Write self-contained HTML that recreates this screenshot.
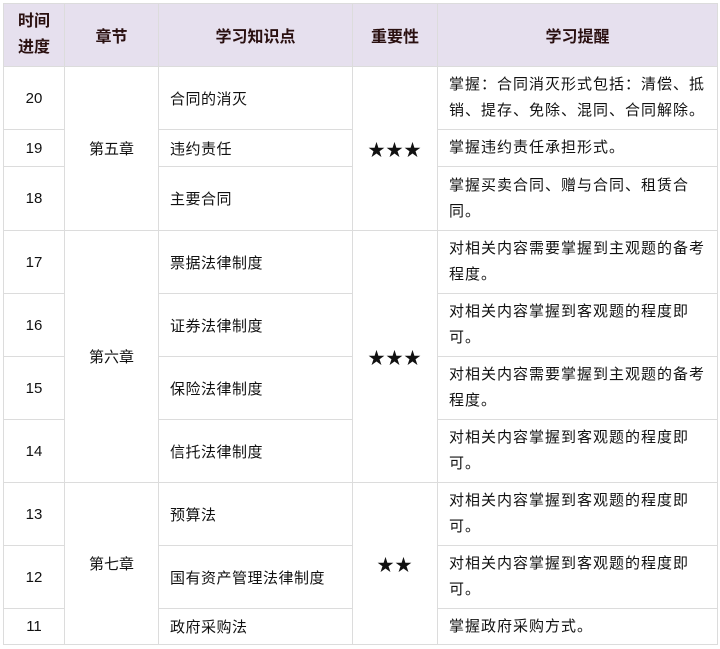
<!DOCTYPE html>
<html><head><meta charset="utf-8"><style>
body{margin:0;background:#fff;width:720px;height:649px;overflow:hidden;font-family:"Liberation Sans","Noto Sans CJK SC",sans-serif;}
table{position:absolute;left:3px;top:3px;border-collapse:collapse;table-layout:fixed;font-size:15px;color:#111;}
td{border:1px solid #dcdcdc;padding:0;vertical-align:middle;}
th{border:1px solid #dcdcdc;background:#e6e0ee;font-weight:bold;font-size:16px;color:#2a1010;padding:0;}
.c{text-align:center}
.l{padding-left:11px;text-align:left;letter-spacing:0.5px}
.t{padding-left:11px;padding-right:8px;line-height:26px;text-align:left;letter-spacing:1px}
.s{font-size:17px;letter-spacing:1px}
</style></head><body>
<table>
<colgroup><col style="width:61px"><col style="width:94px"><col style="width:194px"><col style="width:85px"><col style="width:280px"></colgroup>
<tr style="height:63px"><th style="line-height:26px">时间<br>进度</th><th>章节</th><th>学习知识点</th><th>重要性</th><th>学习提醒</th></tr>
<tr style="height:63px"><td class="c">20</td><td class="c" rowspan="3">第五章</td><td class="l">合同的消灭</td><td class="c s" rowspan="3">★★★</td><td class="t">掌握：合同消灭形式包括：清偿、抵销、提存、免除、混同、合同解除。</td></tr>
<tr style="height:37px"><td class="c">19</td><td class="l">违约责任</td><td class="t">掌握违约责任承担形式。</td></tr>
<tr style="height:64px"><td class="c">18</td><td class="l">主要合同</td><td class="t">掌握买卖合同、赠与合同、租赁合<br>同。</td></tr>
<tr style="height:63px"><td class="c">17</td><td class="c" rowspan="4">第六章</td><td class="l">票据法律制度</td><td class="c s" rowspan="4">★★★</td><td class="t">对相关内容需要掌握到主观题的备考<br>程度。</td></tr>
<tr style="height:63px"><td class="c">16</td><td class="l">证券法律制度</td><td class="t">对相关内容掌握到客观题的程度即<br>可。</td></tr>
<tr style="height:63px"><td class="c">15</td><td class="l">保险法律制度</td><td class="t">对相关内容需要掌握到主观题的备考<br>程度。</td></tr>
<tr style="height:63px"><td class="c">14</td><td class="l">信托法律制度</td><td class="t">对相关内容掌握到客观题的程度即<br>可。</td></tr>
<tr style="height:63px"><td class="c">13</td><td class="c" rowspan="3">第七章</td><td class="l">预算法</td><td class="c s" rowspan="3">★★</td><td class="t">对相关内容掌握到客观题的程度即<br>可。</td></tr>
<tr style="height:63px"><td class="c">12</td><td class="l">国有资产管理法律制度</td><td class="t">对相关内容掌握到客观题的程度即<br>可。</td></tr>
<tr style="height:36px"><td class="c">11</td><td class="l">政府采购法</td><td class="t">掌握政府采购方式。</td></tr>
</table>
</body></html>
